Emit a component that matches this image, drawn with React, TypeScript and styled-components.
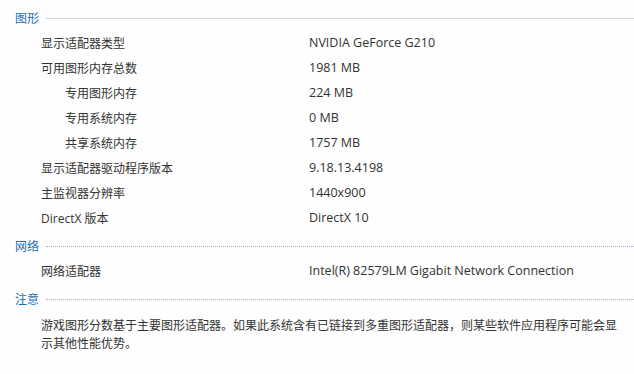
import styled, { createGlobalStyle } from "styled-components";

const GlobalStyle = createGlobalStyle`
  html, body {
    margin: 0;
    padding: 0;
    background: #fdfefd;
  }
  body {
    font-family: "Open Sans", "Noto Sans CJK SC", sans-serif;
    font-size: 12px;
    color: #333;
  }
`;

const Page = styled.div`
  width: 634px;
  padding-top: 7px;
`;

const Heading = styled.div<{ $dotted?: boolean; $first?: boolean }>`
  display: flex;
  align-items: center;
  height: 20px;
  margin-top: ${(p) => (p.$first ? "0" : "5px")};
  margin-bottom: 3px;
  padding-left: 15px;
  color: #1b6fb8;
  font-family: "Noto Sans CJK SC", sans-serif;
  font-size: 12px;
  &::after {
    content: "";
    flex: 1;
    margin-left: 7px;
    margin-top: 2px;
    border-top: 1px ${(p) => (p.$dotted ? "dotted #c59fd2" : "solid #c9d8d0")};
  }
`;

const Row = styled.div`
  display: grid;
  grid-template-columns: 268px 1fr;
  align-items: center;
  height: 25px;
  padding-left: 41px;
`;

const Label = styled.span<{ $indent?: boolean }>`
  padding-left: ${(p) => (p.$indent ? "24px" : "0")};
  white-space: nowrap;
`;

const Value = styled.span`
  font-size: 12.5px;
  white-space: nowrap;
`;

const Note = styled.p`
  margin: 0;
  padding: 5px 0 0 41px;
  width: 582px;
  line-height: 18px;
  font-family: "Noto Sans CJK SC", sans-serif;
`;

type Item = { label: string; value: string; indent?: boolean };

const graphics: Item[] = [
  { label: "显示适配器类型", value: "NVIDIA GeForce G210" },
  { label: "可用图形内存总数", value: "1981 MB" },
  { label: "专用图形内存", value: "224 MB", indent: true },
  { label: "专用系统内存", value: "0 MB", indent: true },
  { label: "共享系统内存", value: "1757 MB", indent: true },
  { label: "显示适配器驱动程序版本", value: "9.18.13.4198" },
  { label: "主监视器分辨率", value: "1440x900" },
  { label: "DirectX 版本", value: "DirectX 10" },
];

const network: Item[] = [
  { label: "网络适配器", value: "Intel(R) 82579LM Gigabit Network Connection" },
];

const Rows = ({ items }: { items: Item[] }) => (
  <>
    {items.map((it) => (
      <Row key={it.label}>
        <Label $indent={it.indent}>{it.label}</Label>
        <Value>{it.value}</Value>
      </Row>
    ))}
  </>
);

export default function App() {
  return (
    <>
      <GlobalStyle />
      <Page>
        <Heading $first>图形</Heading>
        <Rows items={graphics} />
        <Heading $dotted>网络</Heading>
        <Rows items={network} />
        <Heading $dotted>注意</Heading>
        <Note>
          游戏图形分数基于主要图形适配器。如果此系统含有已链接到多重图形适配器，则某些软件应用程序可能会显示其他性能优势。
        </Note>
      </Page>
    </>
  );
}
